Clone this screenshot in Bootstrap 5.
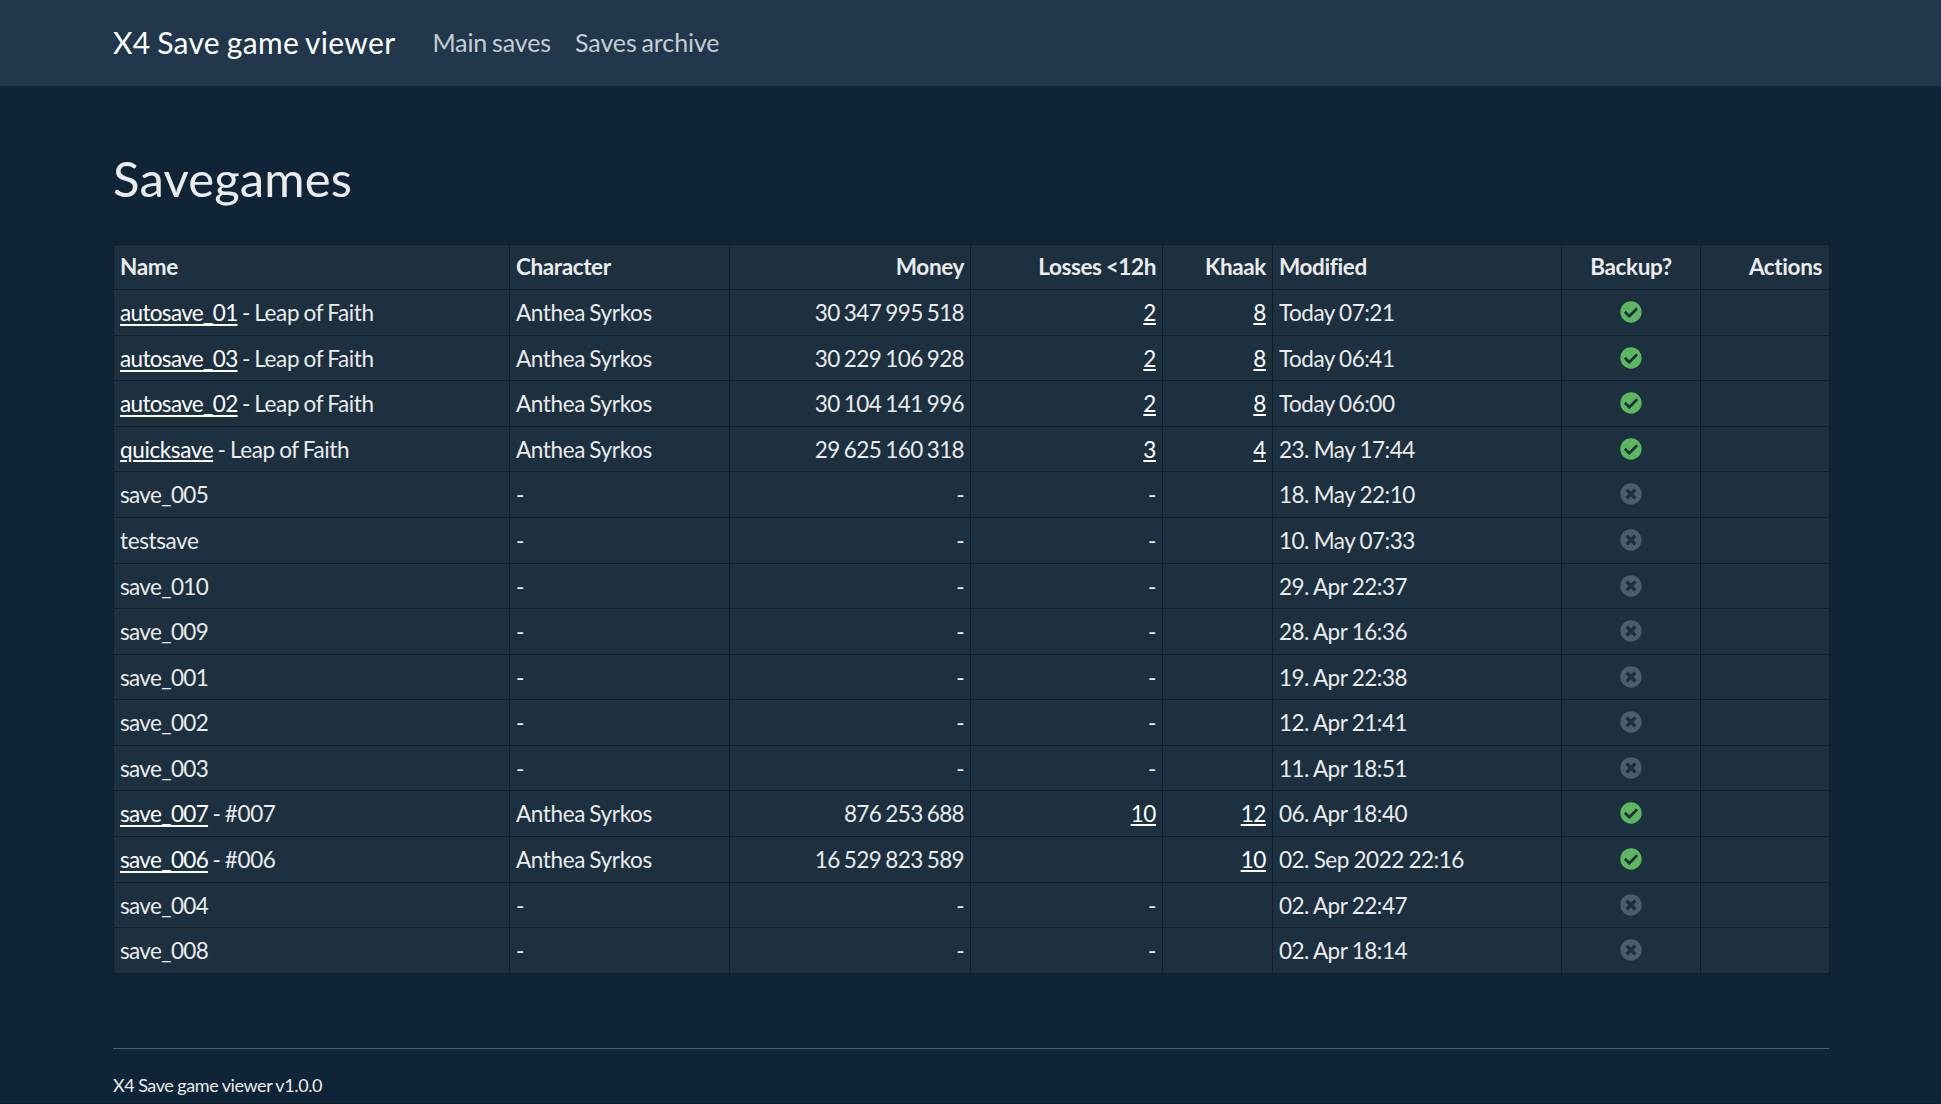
<!DOCTYPE html>
<html lang="en" data-bs-theme="dark">
<head>
<meta charset="utf-8">
<meta name="viewport" content="width=device-width, initial-scale=1">
<title>X4 Save game viewer</title>
<link href="https://cdn.jsdelivr.net/npm/bootstrap@5.3.0/dist/css/bootstrap.min.css" rel="stylesheet">
<style>
  body { font-family: Lato, sans-serif; font-size: 22.5px; line-height: 1.5; letter-spacing: -.38px; word-spacing: -1px; background: #0f2537; color: #ebebeb; height: 100vh; overflow: hidden; border-bottom: 1px solid #0d1c29; }
  .page-wrap { width: 1716px; max-width: none; padding: 0; margin-left: 113px; margin-right: 0; }
  .topbar { height: 86px; background: #20374c; padding: 0; }
  .topbar .navbar-brand { font-size: 30px; color: #fff; margin: -2px 25px 0 0; padding: 0; letter-spacing: .3px; word-spacing: -1.2px; }
  .topbar .navbar-nav .nav-link { font-size: 25px; color: rgba(255,255,255,.75); padding: 0 12px; letter-spacing: -.1px; word-spacing: -1.5px; }
  h1 { font-size: 49px; font-weight: 400; line-height: 58px; margin: 63px 0 37px; color: #ebebeb; letter-spacing: .15px; }
  .saves { --bs-table-bg: #1c3040; --bs-table-color: #ebebeb; --bs-table-border-color: #0f1e2b; table-layout: fixed; width: 1716px; margin: 0; }
  .saves, .saves thead, .saves tbody, .saves tr, .saves th, .saves td { border-color: #0f1e2b !important; }
  .saves > :not(caption) > * > * { padding: 6px; line-height: 33px; white-space: nowrap; }
  .saves > thead > tr > th { padding: 5px 6px 6px; }
  .saves > thead > tr > th:last-child { padding-right: 7px; }
  .saves > tbody > tr.snug > td { padding-bottom: 5px; }
  .saves a { color: #fff; text-decoration: underline; text-decoration-thickness: 2px; text-underline-offset: 2px; }
  .saves a.save-link { text-decoration-skip-ink: none; text-underline-offset: 3px; }
  .sum { letter-spacing: -.65px; word-spacing: -.85px; }
  .when { letter-spacing: -.5px; word-spacing: -.5px; }
  .under { letter-spacing: -.66px; }
  .mark-icon { width: 22px; height: 22px; display: inline-block; vertical-align: -2px; }
  .is-ok { color: #5cb85c; }
  .is-off { color: #4e5d6c; }
  hr { margin: 74px 0 23px; border-top: 1px solid #4e5d6c; opacity: 1; }
  footer p { font-size: 18px; line-height: 27px; margin: 0; letter-spacing: -.4px; word-spacing: -.4px; }
</style>
</head>
<body>
<svg class="d-none">
  <symbol id="ok" viewBox="0 0 512 512"><path fill="currentColor" d="M504 256c0 136.967-111.033 248-248 248S8 392.967 8 256 119.033 8 256 8s248 111.033 248 248zM227.314 387.314l184-184c6.248-6.248 6.248-16.379 0-22.627l-22.627-22.627c-6.248-6.249-16.379-6.249-22.628 0L216 308.118l-70.059-70.059c-6.248-6.248-16.379-6.248-22.628 0l-22.627 22.627c-6.248 6.248-6.248 16.379 0 22.627l104 104c6.249 6.249 16.379 6.249 22.628.001z"/></symbol>
  <symbol id="off" viewBox="0 0 512 512"><path fill="currentColor" d="M256 8C119 8 8 119 8 256s111 248 248 248 248-111 248-248S393 8 256 8zm121.600 313.100c4.700 4.700 4.700 12.300 0 17L338 377.600c-4.700 4.700-12.300 4.700-17 0L256 312l-65.100 65.600c-4.700 4.700-12.300 4.700-17 0L134.400 338c-4.700-4.700-4.700-12.300 0-17l65.600-65-65.600-65.100c-4.700-4.700-4.700-12.300 0-17l39.600-39.600c4.700-4.700 12.300-4.700 17 0l65 65.700 65.100-65.600c4.700-4.700 12.300-4.700 17 0l39.600 39.600c4.700 4.700 4.700 12.300 0 17L312 256l65.600 65.100z"/></symbol>
</svg>
<nav class="navbar navbar-expand topbar">
  <div class="container page-wrap">
    <a class="navbar-brand" href="#">X4 Save game viewer</a>
    <ul class="navbar-nav me-auto">
      <li class="nav-item"><a class="nav-link" href="#">Main saves</a></li>
      <li class="nav-item"><a class="nav-link" href="#">Saves archive</a></li>
    </ul>
  </div>
</nav>
<main class="container page-wrap">
  <h1>Savegames</h1>
  <table class="table table-sm table-bordered saves">
    <colgroup><col style="width:396px"><col style="width:220px"><col style="width:241px"><col style="width:192px"><col style="width:110px"><col style="width:289px"><col style="width:139px"><col style="width:129px"></colgroup>
    <thead><tr><th>Name</th><th>Character</th><th class="text-end">Money</th><th class="text-end">Losses &lt;12h</th><th class="text-end">Khaak</th><th>Modified</th><th class="text-center">Backup?</th><th class="text-end">Actions</th></tr></thead>
    <tbody id="rows"></tbody>
  </table>
</main>
<footer class="container page-wrap">
  <hr>
  <p>X4 Save game viewer v1.0.0</p>
</footer>
<script>
  const saves = [
    ['autosave_01', 'Leap of Faith', '30 347 995 518', '2', '8', 'Today 07:21'],
    ['autosave_03', 'Leap of Faith', '30 229 106 928', '2', '8', 'Today 06:41'],
    ['autosave_02', 'Leap of Faith', '30 104 141 996', '2', '8', 'Today 06:00'],
    ['quicksave', 'Leap of Faith', '29 625 160 318', '3', '4', '23. May 17:44'],
    ['save_005', '18. May 22:10'],
    ['testsave', '10. May 07:33'],
    ['save_010', '29. Apr 22:37'],
    ['save_009', '28. Apr 16:36'],
    ['save_001', '19. Apr 22:38'],
    ['save_002', '12. Apr 21:41'],
    ['save_003', '11. Apr 18:51'],
    ['save_007', '#007', '876 253 688', '10', '12', '06. Apr 18:40'],
    ['save_006', '#006', '16 529 823 589', '', '10', '02. Sep 2022 22:16'],
    ['save_004', '02. Apr 22:47'],
    ['save_008', '02. Apr 18:14']
  ];
  // Rows one pixel shorter than the rest, so the average pitch is about 45.6px
  const snug = [1, 3, 6, 8, 10, 13];
  const link = (t, cls = '') => t ? `<a class="${cls}" href="#">${t}</a>` : '';
  const name = t => t.includes('_') ? `<span class="under">${t}</span>` : t;
  const icon = n => `<svg class="mark-icon is-${n}"><use href="#${n}"/></svg>`;
  document.getElementById('rows').innerHTML = saves.map((s, i) => {
    const full = s.length > 2;
    const c = full
      ? [`${link(name(s[0]), s[0].includes('_') ? 'save-link' : '')} - ${s[1]}`, 'Anthea Syrkos', s[2], link(s[3]), link(s[4]), s[5], icon('ok')]
      : [name(s[0]), '-', '-', '-', '', s[1], icon('off')];
    return `<tr${snug.includes(i) ? ' class="snug"' : ''}><td>${c[0]}</td><td>${c[1]}</td><td class="text-end sum">${c[2]}</td><td class="text-end">${c[3]}</td><td class="text-end">${c[4]}</td><td class="when">${c[5]}</td><td class="text-center">${c[6]}</td><td></td></tr>`;
  }).join('');
</script>
<script src="https://cdn.jsdelivr.net/npm/bootstrap@5.3.0/dist/js/bootstrap.bundle.min.js"></script>
</body>
</html>
